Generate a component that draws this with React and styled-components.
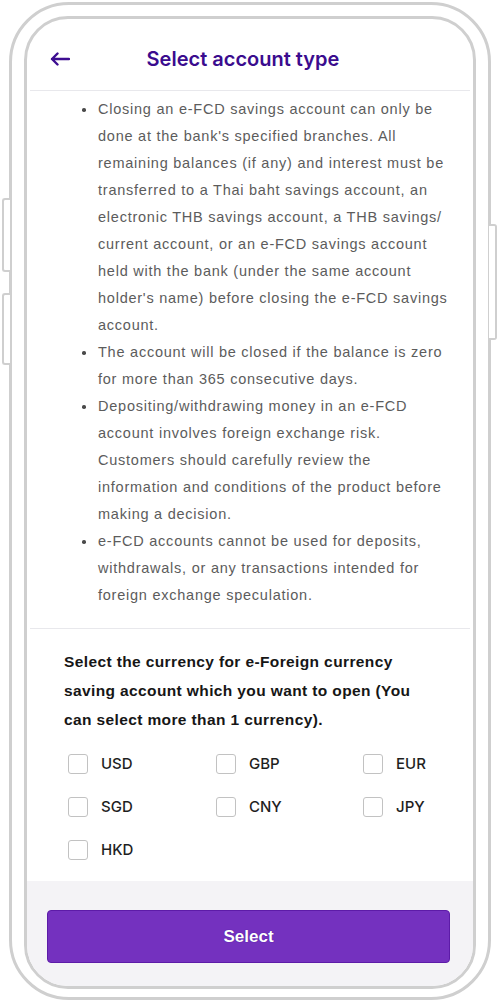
import React, { useState } from 'react';
import styled, { createGlobalStyle } from 'styled-components';

const GlobalStyle = createGlobalStyle`
  html, body {
    margin: 0;
    padding: 0;
    background: #ffffff;
  }
  body {
    font-family: "Liberation Sans", Arial, sans-serif;
  }
`;

const Device = styled.div`
  position: relative;
  width: 500px;
  height: 1004px;
  padding: 2px 9px 4px 9px;
  box-sizing: border-box;
  display: flex;
`;

const SideKey = styled.div`
  position: absolute;
  top: ${({ $top }) => $top}px;
  height: ${({ $height }) => $height}px;
  width: 8px;
  box-sizing: border-box;
  border: 2px solid #cfcfcf;
  background: #ffffff;
  ${({ $right }) =>
    $right
      ? `left: 489px; border-left: none; border-radius: 0 3px 3px 0;`
      : `left: 2px; border-right: none; border-radius: 3px 0 0 3px;`}
`;

const OuterFrame = styled.div`
  flex: 1;
  display: flex;
  box-sizing: border-box;
  border: 3px solid #cfcfcf;
  border-radius: 60px;
  padding: 11px 12px 8px 12px;
  background: #ffffff;
`;

const Screen = styled.div`
  flex: 1;
  display: flex;
  flex-direction: column;
  box-sizing: border-box;
  border: 3px solid #cfcfcf;
  border-radius: 44px;
  overflow: hidden;
  background: #ffffff;
`;

const Header = styled.div`
  display: flex;
  align-items: center;
  height: 28px;
  padding: 26px 20px 17px 20px;
  margin: 0 3px;
  border-bottom: 1px solid #e8e8ec;
`;

const BackButton = styled.button`
  width: 22px;
  height: 22px;
  padding: 0;
  border: none;
  background: none;
  display: flex;
  align-items: center;
  color: #3d0d91;
  cursor: pointer;
`;

const Title = styled.h1`
  flex: 1;
  margin: 0 36px 0 0;
  text-align: center;
  font-family: Inter, "Liberation Sans", sans-serif;
  font-size: 20px;
  font-weight: 600;
  color: #3a0c8e;
`;

const Notes = styled.ul`
  list-style: none;
  margin: 0 3px;
  padding: 5px 20px 19px 68px;
  border-bottom: 1px solid #e8e8ec;
`;

const Note = styled.li`
  position: relative;
  font-size: 14.5px;
  line-height: 27px;
  letter-spacing: 0.76px;
  color: #5c5c5c;
  white-space: nowrap;

  &::before {
    content: '';
    position: absolute;
    left: -16px;
    top: 12px;
    width: 3.5px;
    height: 3.5px;
    border-radius: 50%;
    background: #4a4a4a;
  }
`;

const CurrencySection = styled.div`
  padding: 18px 20px 10px 37px;
`;

const Question = styled.p`
  margin: 0;
  font-size: 15.5px;
  font-weight: 700;
  line-height: 29px;
  letter-spacing: 0.38px;
  color: #161616;
  white-space: nowrap;
`;

const CurrencyGrid = styled.div`
  display: grid;
  grid-template-columns: 148px 147px 1fr;
  margin: 8px 0 0 4px;
`;

const Option = styled.label`
  display: flex;
  align-items: center;
  gap: 13px;
  height: 43px;
  cursor: pointer;
`;

const Box = styled.span`
  width: 20px;
  height: 20px;
  box-sizing: border-box;
  border: 1.5px solid ${({ $checked }) => ($checked ? '#7431bf' : '#c2c2c2')};
  border-radius: 3px;
  background: ${({ $checked }) => ($checked ? '#7431bf' : '#ffffff')};
`;

const OptionText = styled.span`
  font-family: Inter, "Liberation Sans", sans-serif;
  font-size: 15px;
  font-weight: 500;
  color: #1f1f1f;
`;

const Footer = styled.div`
  flex: 1;
  background: #f4f3f6;
  padding: 29px 23px 0 20px;
`;

const SelectButton = styled.button`
  width: 100%;
  height: 53px;
  border: 1px solid #5d1ba8;
  border-radius: 4px;
  background: #7431bf;
  color: #ffffff;
  font-family: "Liberation Sans", Arial, sans-serif;
  font-size: 17px;
  font-weight: 700;
  cursor: pointer;
  text-shadow: 0 0 1px #3a0c8e;
`;

const notes = [
  [
    'Closing an e-FCD savings account can only be',
    "done at the bank's specified branches. All",
    'remaining balances (if any) and interest must be',
    'transferred to a Thai baht savings account, an',
    'electronic THB savings account, a THB savings/',
    'current account, or an e-FCD savings account',
    'held with the bank (under the same account',
    "holder's name) before closing the e-FCD savings",
    'account.',
  ],
  ['The account will be closed if the balance is zero', 'for more than 365 consecutive days.'],
  [
    'Depositing/withdrawing money in an e-FCD',
    'account involves foreign exchange risk.',
    'Customers should carefully review the',
    'information and conditions of the product before',
    'making a decision.',
  ],
  [
    'e-FCD accounts cannot be used for deposits,',
    'withdrawals, or any transactions intended for',
    'foreign exchange speculation.',
  ],
];

const question = [
  'Select the currency for e-Foreign currency',
  'saving account which you want to open (You',
  'can select more than 1 currency).',
];

const currencies = ['USD', 'GBP', 'EUR', 'SGD', 'CNY', 'JPY', 'HKD'];

const withBreaks = (lines) =>
  lines.map((line, i) => (
    <React.Fragment key={i}>
      {i > 0 && <br />}
      {line}
    </React.Fragment>
  ));

function BackArrow() {
  return (
    <svg width="20" height="14" viewBox="0 0 20 14" fill="none">
      <path
        d="M19 7H2M7.5 1.5L2 7l5.5 5.5"
        stroke="currentColor"
        strokeWidth="2.4"
        strokeLinecap="round"
        strokeLinejoin="round"
      />
    </svg>
  );
}

export default function App() {
  const [picked, setPicked] = useState([]);
  const toggle = (code) =>
    setPicked((p) => (p.includes(code) ? p.filter((c) => c !== code) : [...p, code]));

  return (
    <>
      <GlobalStyle />
      <Device>
        <SideKey $top={198} $height={74} />
        <SideKey $top={293} $height={72} />
        <SideKey $right $top={224} $height={116} />
        <OuterFrame>
          <Screen>
            <Header>
              <BackButton aria-label="Back">
                <BackArrow />
              </BackButton>
              <Title>Select account type</Title>
            </Header>
            <Notes>
              {notes.map((lines, i) => (
                <Note key={i}>{withBreaks(lines)}</Note>
              ))}
            </Notes>
            <CurrencySection>
              <Question>{withBreaks(question)}</Question>
              <CurrencyGrid>
                {currencies.map((c) => (
                  <Option key={c} onClick={() => toggle(c)}>
                    <Box $checked={picked.includes(c)} />
                    <OptionText>{c}</OptionText>
                  </Option>
                ))}
              </CurrencyGrid>
            </CurrencySection>
            <Footer>
              <SelectButton>Select</SelectButton>
            </Footer>
          </Screen>
        </OuterFrame>
      </Device>
    </>
  );
}
